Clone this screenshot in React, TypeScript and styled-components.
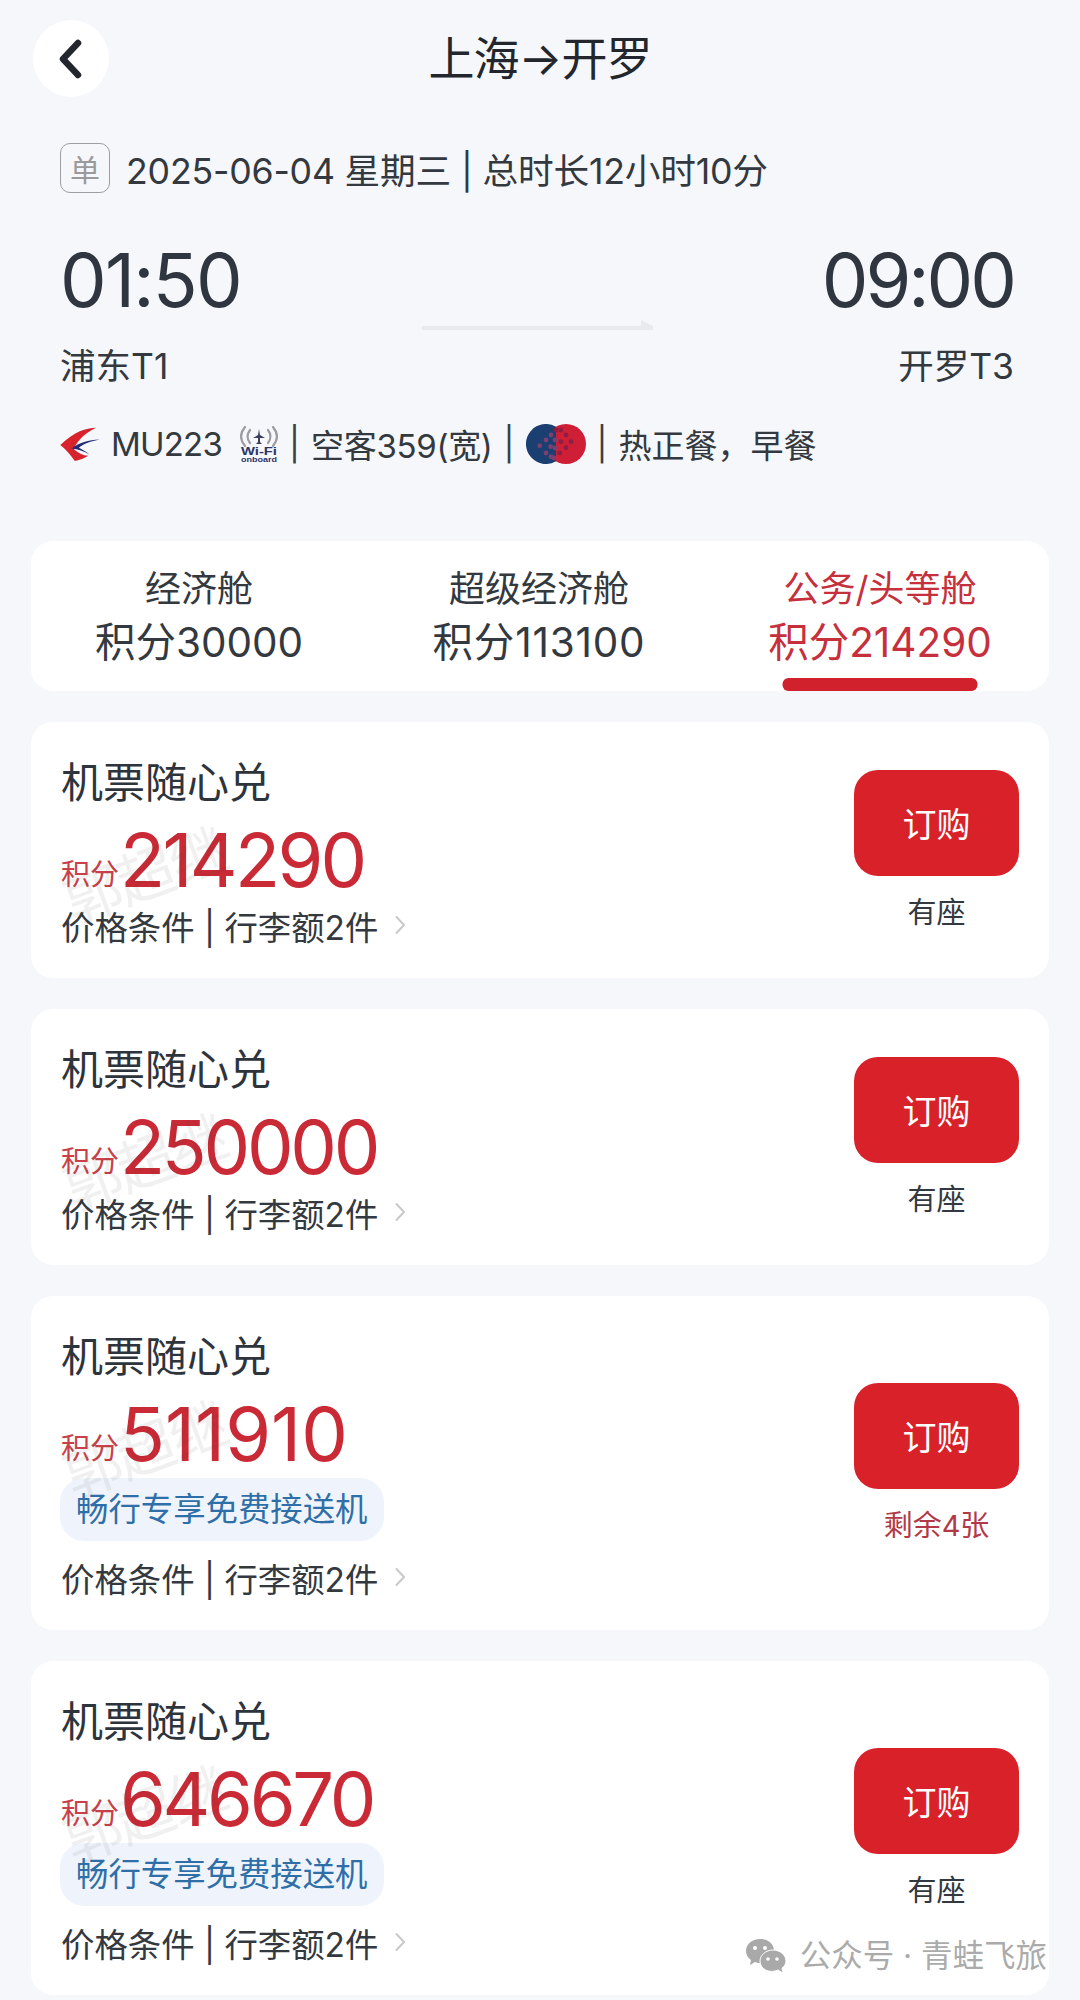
import React from "react";
import styled, { createGlobalStyle } from "styled-components";

const Global = createGlobalStyle`
  html, body { margin: 0; padding: 0; background: #f5f7fb; }
  body { font-family: "Inter", "Noto Sans CJK SC", sans-serif; color: #2e343c; }
  * { box-sizing: border-box; }
`;

const Page = styled.div`
  position: relative;
  width: 1080px;
  height: 2000px;
  overflow: hidden;
  background: #f5f7fb;
  padding: 20px 31px 0;
`;

const Header = styled.header`
  position: relative;
  display: flex;
  justify-content: center;
  align-items: center;
  height: 77px;
`;

const BackButton = styled.div`
  position: absolute;
  left: 2px;
  top: 0;
  width: 76px;
  height: 77px;
  border-radius: 50%;
  background: #fff;
  display: flex;
  align-items: center;
  justify-content: center;
`;

const Title = styled.h1`
  margin: 0;
  font-size: 46px;
  font-weight: 400;
  line-height: 77px;
  color: #23272d;
  letter-spacing: -1px;
`;

const FlightInfo = styled.section`
  padding: 46px 35px 0 29px;
`;

const DateRow = styled.div`
  display: flex;
  align-items: center;
  gap: 16px;
  height: 50px;
  font-size: 35.7px;
  letter-spacing: -0.2px;
  color: #33393f;
  white-space: nowrap;
`;

const TripBadge = styled.span`
  width: 50px;
  height: 50px;
  border: 1.5px solid #9b9ea3;
  border-radius: 10px;
  display: flex;
  align-items: center;
  justify-content: center;
  font-size: 30px;
  color: #9a9a9a;
`;

const TimeRow = styled.div`
  display: flex;
  justify-content: space-between;
  align-items: flex-start;
  margin-top: 45px;
  height: 107px;
`;

const Time = styled.div<{ $tight: number }>`
  font-size: 74px;
  line-height: 84px;
  letter-spacing: ${(p) => p.$tight}px;
  color: #2f3640;
`;

const Arrow = styled.div`
  position: relative;
  width: 231px;
  height: 4px;
  margin: 88px 0 0 12px;
  background: #e8eaee;
  &::after {
    content: "";
    position: absolute;
    right: 0;
    top: -6px;
    border-left: 12px solid #e8eaee;
    border-top: 6px solid transparent;
  }
`;

const AirportRow = styled.div`
  display: flex;
  justify-content: space-between;
  font-size: 35.5px;
  line-height: 44px;
  color: #33393f;
`;

const MetaRow = styled.div`
  display: flex;
  align-items: center;
  height: 44px;
  margin-top: 33px;
  font-size: 33px;
  color: #33393f;
  white-space: pre;
`;

const Flight = styled.span`
  margin-left: 11px;
  margin-right: 18px;
  letter-spacing: -0.8px;
`;

const Aircraft = styled.span`
  letter-spacing: -0.3px;
`;

const Sep = styled.span`
  margin: 0 11px;
  color: #3a3f46;
`;

const Tabs = styled.nav`
  display: grid;
  grid-template-columns: 336px 344px 1fr;
  height: 150px;
  margin-top: 75px;
  border-radius: 22px;
  background: #fff;
`;

const Tab = styled.div<{ $active?: boolean }>`
  position: relative;
  display: flex;
  flex-direction: column;
  align-items: center;
  padding-top: 23px;
  color: ${(p) => (p.$active ? "#c6303c" : "#33393f")};
`;

const TabLabel = styled.div`
  font-size: 36px;
  line-height: 50px;
  white-space: nowrap;
`;

const TabValue = styled.div<{ $spread?: boolean }>`
  font-size: 40.5px;
  line-height: 54px;
  margin-top: 2px;
  letter-spacing: ${(p) => (p.$spread ? "0.8px" : "0")};
  white-space: nowrap;
`;

const TabBar = styled.div`
  position: absolute;
  left: 50%;
  bottom: 0;
  width: 195px;
  height: 13px;
  transform: translateX(-50%);
  border-radius: 6px;
  background: #d0212c;
`;

const List = styled.div`
  display: flex;
  flex-direction: column;
  gap: 31px;
  margin-top: 31px;
`;

const Card = styled.article`
  display: flex;
  justify-content: space-between;
  align-items: center;
  border-radius: 22px;
  background: #fff;
  padding: 36px 30px 31px 30px;
`;

const CardMain = styled.div`
  display: flex;
  flex-direction: column;
  align-items: flex-start;
`;

const CardTitle = styled.div`
  font-size: 42px;
  line-height: 50px;
  color: #2e343c;
`;

const PriceRow = styled.div`
  position: relative;
  display: flex;
  align-items: baseline;
  height: 86px;
  line-height: 90px;
  margin-top: 7px;
  color: #c92a35;
`;

const PriceUnit = styled.span`
  position: relative;
  top: -2px;
  font-size: 29px;
  color: #c8404a;
`;

const PriceValue = styled.span<{ $tight: number }>`
  font-size: 74px;
  letter-spacing: ${(p) => p.$tight}px;
  margin-left: 1px;
`;

const Watermark = styled.span`
  position: absolute;
  left: 0;
  top: 32px;
  font-size: 58px;
  line-height: 58px;
  letter-spacing: -2px;
  color: rgba(60, 60, 60, 0.08);
  transform: rotate(-20deg);
  white-space: nowrap;
  pointer-events: none;
`;

const Chip = styled.div`
  height: 63px;
  margin-top: 3px;
  margin-left: -1px;
  padding: 0 16px;
  border-radius: 24px;
  background: #eff4fc;
  color: #2f6fa8;
  font-size: 32.4px;
  line-height: 63px;
  white-space: nowrap;
`;

const Conditions = styled.div<{ $chip?: boolean }>`
  display: flex;
  align-items: center;
  height: 44px;
  margin-top: ${(p) => (p.$chip ? "14px" : "2px")};
  font-size: 33.4px;
  color: #33393f;
  white-space: pre;
`;

const Chevron = styled.svg`
  margin-left: 17px;
`;

const Side = styled.div`
  display: flex;
  flex-direction: column;
  align-items: center;
  width: 165px;
  margin-top: -3px;
`;

const BuyButton = styled.div`
  width: 165px;
  height: 106px;
  border-radius: 24px;
  background: #d9212a;
  color: #fff;
  font-size: 34px;
  display: flex;
  align-items: center;
  justify-content: center;
`;

const Stock = styled.div<{ $low?: boolean }>`
  margin-top: 17px;
  font-size: 29px;
  line-height: 40px;
  color: ${(p) => (p.$low ? "#b23a48" : "#33393f")};
`;

const Credit = styled.div`
  position: absolute;
  right: 33px;
  top: 1934px;
  display: flex;
  align-items: center;
  gap: 4px;
  font-size: 31.5px;
  line-height: 44px;
  color: #ababab;
  white-space: pre;
`;

const ChevronIcon = () => (
  <Chevron width="11" height="20" viewBox="0 0 11 20" fill="none">
    <path d="M1.5 2 L9 10 L1.5 18" stroke="#c8c9cc" strokeWidth="2" strokeLinecap="round" strokeLinejoin="round" />
  </Chevron>
);

const EasternLogo = () => (
  <svg width="40" height="34" viewBox="0 0 110 95">
    <path d="M100 2 C70 3 42 12 0 50 C14 60 28 78 40 94 C48 94 62 90 78 80 C62 80 50 72 38 62 C48 34 75 14 100 2 Z" fill="#d8222c" />
    <path d="M110 35 C80 35 50 45 32 60 C50 62 65 68 82 77 C70 68 60 62 52 58 C65 47 85 40 110 35 Z" fill="#242a78" />
  </svg>
);

const WifiLogo = () => (
  <svg width="38" height="38" viewBox="0 0 38 38">
    <g fill="none" stroke="#9c9ca0" strokeWidth="2.2" strokeLinecap="round">
      <path d="M5 2 C0 8 0 15 5 21" />
      <path d="M10 5 C7 9 7 14 10 18" />
      <path d="M33 2 C38 8 38 15 33 21" />
      <path d="M28 5 C31 9 31 14 28 18" />
    </g>
    <path d="M19 4 L20 10 L25 13 L20 13 L20 17 L22 19 L16 19 L18 17 L18 13 L13 13 L18 10 Z" fill="#3a3f5c" />
    <text x="19" y="30" textAnchor="middle" fontFamily="Liberation Sans" fontWeight="700" fontSize="10" textLength="36" lengthAdjust="spacingAndGlyphs" fill="#2c3566">Wi-Fi</text>
    <text x="19" y="37" textAnchor="middle" fontFamily="Liberation Sans" fontWeight="700" fontSize="7" textLength="36" lengthAdjust="spacingAndGlyphs" fill="#2c3566">onboard</text>
  </svg>
);

const AllianceLogo = () => {
  const dots = [
    [13.7, 21.7], [20, 16], [25, 11], [30, 6], [34.7, 6], [40, 11], [45, 17.7], [40, 23.7],
    [35, 17.7], [29, 16], [24.7, 22.7], [20, 29], [29, 24], [25, 32.7], [33.7, 29], [28, 34],
  ];
  return (
    <svg width="60" height="40" viewBox="0 0 60 40">
      <circle cx="40" cy="20" r="20" fill="#cf1f36" />
      <path d="M30 2.7 A20 20 0 1 0 30 37.3 Z" fill="#1b3f70" />
      {dots.map(([x, y], i) => (
        <circle key={i} cx={x} cy={y} r="2.4" fill={x < 30 ? "#7a4170" : "#8c1f42"} />
      ))}
    </svg>
  );
};

const WeChatLogo = () => (
  <svg width="42" height="36" viewBox="0 0 42 36">
    <path d="M15 1 C7 1 1 6 1 13 C1 17 3 20 6 22 L5 27 L10 24 C12 25 14 25 16 25 C25 25 29 19 29 13 C29 6 23 1 15 1 Z" fill="#a9a9a9" />
    <circle cx="10" cy="10" r="2" fill="#fff" />
    <circle cx="20" cy="10" r="2" fill="#fff" />
    <path d="M28 12 C35 12 41 17 41 23 C41 26 39 29 37 30 L38 35 L33 32 C24 36 15 31 15 23 C15 17 21 12 28 12 Z" fill="#a9a9a9" stroke="#fff" strokeWidth="1" />
    <circle cx="23" cy="21" r="1.8" fill="#fff" />
    <circle cx="32" cy="21" r="1.8" fill="#fff" />
  </svg>
);

const offers = [
  { price: "214290", tight: -2.7, stock: "有座" },
  { price: "250000", tight: -3.3, stock: "有座" },
  { price: "511910", tight: 0, stock: "剩余4张", chip: true, low: true },
  { price: "646670", tight: -3.3, stock: "有座", chip: true },
];

export default function App() {
  return (
    <>
      <Global />
      <Page>
        <Header>
          <BackButton>
            <svg width="26" height="42" viewBox="0 0 26 42" fill="none">
              <path d="M20 5 L5 21 L20 37" stroke="#23272d" strokeWidth="6.5" strokeLinecap="round" strokeLinejoin="round" />
            </svg>
          </BackButton>
          <Title>上海→开罗</Title>
        </Header>
        <FlightInfo>
          <DateRow>
            <TripBadge>单</TripBadge>
            <span>2025-06-04 星期三 | 总时长12小时10分</span>
          </DateRow>
          <TimeRow>
            <Time $tight={-1.8}>01:50</Time>
            <Arrow />
            <Time $tight={-3}>09:00</Time>
          </TimeRow>
          <AirportRow>
            <span>浦东T1</span>
            <span>开罗T3</span>
          </AirportRow>
          <MetaRow>
            <EasternLogo />
            <Flight>MU223</Flight>
            <WifiLogo />
            <Sep>|</Sep>
            <Aircraft>空客359(宽)</Aircraft>
            <Sep>|</Sep>
            <AllianceLogo />
            <Sep>|</Sep>
            <span>热正餐，早餐</span>
          </MetaRow>
        </FlightInfo>
        <Tabs>
          <Tab>
            <TabLabel>经济舱</TabLabel>
            <TabValue>积分30000</TabValue>
          </Tab>
          <Tab>
            <TabLabel>超级经济舱</TabLabel>
            <TabValue $spread>积分113100</TabValue>
          </Tab>
          <Tab $active>
            <TabLabel>公务/头等舱</TabLabel>
            <TabValue>积分214290</TabValue>
            <TabBar />
          </Tab>
        </Tabs>
        <List>
          {offers.map((o) => (
            <Card key={o.price}>
              <CardMain>
                <CardTitle>机票随心兑</CardTitle>
                <PriceRow>
                  <PriceUnit>积分</PriceUnit>
                  <PriceValue $tight={o.tight}>{o.price}</PriceValue>
                  <Watermark>郭超继</Watermark>
                </PriceRow>
                {o.chip && <Chip>畅行专享免费接送机</Chip>}
                <Conditions $chip={o.chip}>
                  <span>价格条件 | 行李额2件</span>
                  <ChevronIcon />
                </Conditions>
              </CardMain>
              <Side>
                <BuyButton>订购</BuyButton>
                <Stock $low={o.low}>{o.stock}</Stock>
              </Side>
            </Card>
          ))}
        </List>
        <Credit>
          <WeChatLogo />
          <span> 公众号 · 青蛙飞旅</span>
        </Credit>
      </Page>
    </>
  );
}
